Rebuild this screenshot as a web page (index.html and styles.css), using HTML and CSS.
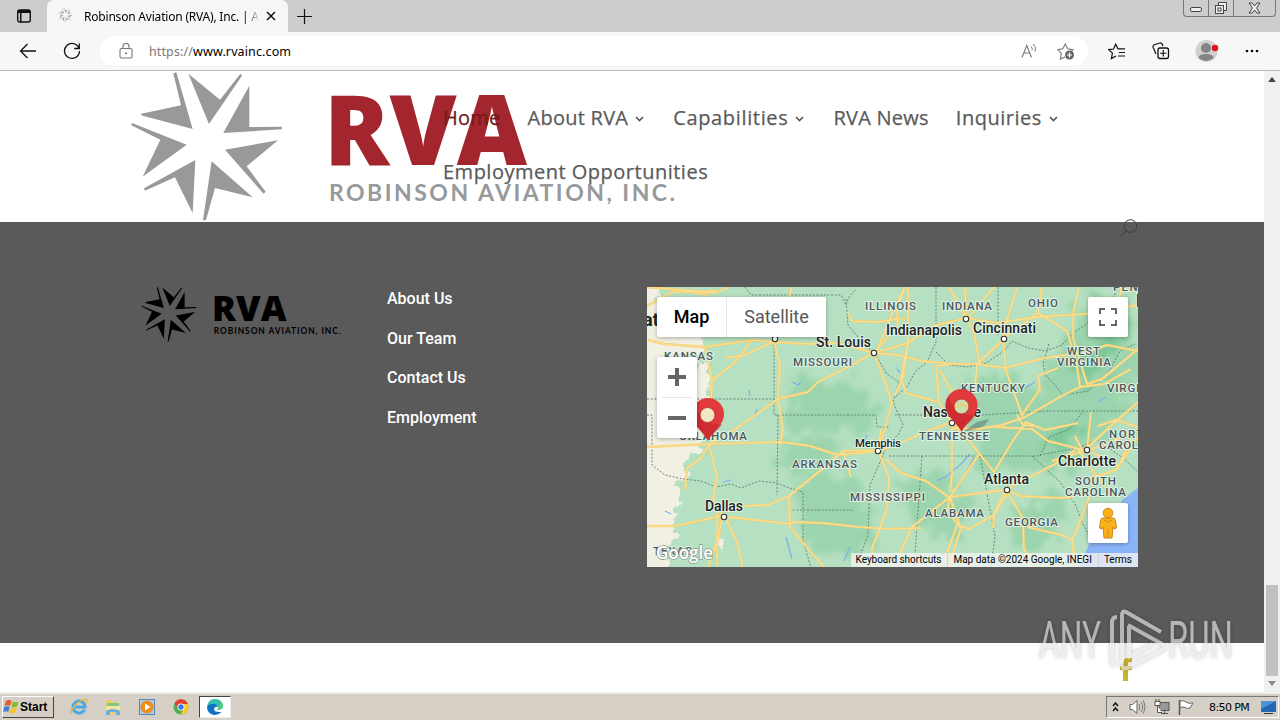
FILE: index.html
```html
<!DOCTYPE html>
<html lang="en">
<head>
  <meta charset="UTF-8">
  <meta name="viewport" content="width=device-width, initial-scale=1.0">
  <title>Robinson Aviation (RVA), Inc.</title>
  <link rel="stylesheet" href="styles.css">
</head>
<body>
  <svg class="defs" width="0" height="0">
    <symbol id="star" viewBox="33 12 454 450">
      <path d="M160 16l9-3 49 170-150-40q-8-3-4-6l119-25zM205 17l95 78 60-76q6-2 6 4l-99 145zM388 53v124l98-1v8l-176 11zM474 217l-94 78 57 76-6 6-116-132zM275 280l123 108-113-28-27 96-9 1zM226 276l-8 160-53-108-90 40-3-7zM200 230l-132 96 53-111-87-43 2-7z"/>
    </symbol>
    <symbol id="logo" viewBox="0 0 544 150">
      <use href="#star" width="151.3" height="150"/>
      <text class="logo-rva" x="193" y="92.5" textLength="203" lengthAdjust="spacingAndGlyphs">RVA</text>
      <text class="logo-sub" x="198" y="129" textLength="346">ROBINSON AVIATION, INC.</text>
    </symbol>
    <symbol id="pin" viewBox="0 0 34 44">
      <path d="M17 43C14 34 1 28 1 16a16 16 0 0 1 32 0c0 12-13 18-16 27z" fill="#e03a3c"/>
      <path d="M17 43C14 34 1 28 1 16a16 16 0 0 1 3-9c3 15 18 21 27 19-4 7-11 10-14 17z" fill="#c2232a" opacity=".6"/>
    </symbol>
  </svg>

  <div class="tabbar">
    <svg class="tab-menu" width="16" height="16" viewBox="0 0 16 16"><rect x="1.700" y="2" width="12.600" height="12" rx="2" fill="none" stroke="#111" stroke-width="1.400"/><path d="M2 2h12v3H5.500V14H4V5H2z" fill="#111"/></svg>
    <div class="tab">
      <svg class="favicon" width="16" height="16"><use href="#star" width="15" height="15"/></svg>
      <span class="tab-title">Robinson Aviation (RVA), Inc. | A</span>
      <svg width="10" height="10" viewBox="0 0 10 10"><path d="M1 1l8 8M9 1L1 9" stroke="#111" stroke-width="1.500"/></svg>
    </div>
    <svg class="new-tab" width="15" height="15" viewBox="0 0 15 15"><path d="M7.500 0v15M0 7.500h15" stroke="#111" stroke-width="1.200"/></svg>
    <div class="win-buttons">
      <span><svg width="14" height="14" viewBox="0 0 14 14"><rect x="1.500" y="6.500" width="11" height="4" rx="1.500" fill="#eee" stroke="#444"/></svg></span>
      <span><svg width="14" height="14" viewBox="0 0 14 14"><path d="M4.500 4V1.500h8v8H10" fill="#eee" stroke="#444"/><rect x="1.500" y="4.500" width="8" height="8" fill="#eee" stroke="#444"/><rect x="4" y="7" width="3" height="3" fill="none" stroke="#444"/></svg></span>
      <span class="win-close"><svg width="13" height="12" viewBox="0 0 13 12"><path d="M1 1h3l2.500 3L9 1h3L8.500 6l3.500 5H9L6.500 8 4 11H1l3.500-5z" fill="#eee" stroke="#444"/></svg></span>
    </div>
  </div>

  <div class="toolbar">
    <svg class="back" width="18" height="16" viewBox="0 0 18 16"><path d="M17 8H2M8.500 1L1.500 8l7 7" fill="none" stroke="#111" stroke-width="1.300"/></svg>
    <svg class="reload" width="18" height="18" viewBox="0 0 18 18"><path d="M16 6.200A7.500 7.500 0 1 0 16.500 9M16.300 1.500v5h-5" fill="none" stroke="#111" stroke-width="1.300"/></svg>
    <div class="address">
      <svg width="14" height="16" viewBox="0 0 14 16"><rect x="1" y="5.500" width="12" height="9.500" rx="1.500" fill="none" stroke="#777" stroke-width="1.100"/><path d="M4 5.500V3.500a3 3 0 0 1 6 0v2" fill="none" stroke="#777" stroke-width="1.100"/><circle cx="7" cy="10.200" r="1" fill="#777"/></svg>
      <span class="url"><i>https://</i>www.rvainc.com</span>
      <svg class="read" width="17" height="16" viewBox="0 0 17 16"><path d="M1 14.500L5.800 2.500l4.700 12M2.800 10h6" fill="none" stroke="#777" stroke-width="1.100"/><path d="M10 3.500q2 1.500 1 4M12 1q4 3 2 7.500" fill="none" stroke="#777"/></svg>
      <svg class="fav" width="18" height="17" viewBox="0 0 18 17"><path d="M8 14l-4.500 2 .8-5.500L.8 6.600l5-.8L8.300 1l2.300 4.800 5.400.8-2 2" fill="none" stroke="#777" stroke-width="1.100"/><circle cx="12.500" cy="12" r="4.500" fill="#666"/><path d="M12.500 9.500v5M10 12h5" stroke="#fff" stroke-width="1.200"/></svg>
    </div>
    <svg class="favorites" width="18" height="17" viewBox="0 0 18 17"><path d="M17 5.800h-7L7.700 1.200 5.500 6 .8 6.600l3.600 3.600-1 5.300L8 13M11 9.500h6M10 13h7" fill="none" stroke="#111" stroke-width="1.200"/></svg>
    <svg class="collections" width="18" height="18" viewBox="0 0 18 18"><path d="M4 12L1.200 5.500q-.7-2 1-2.800L8 1q2-.5 3 3" fill="none" stroke="#111" stroke-width="1.200"/><rect x="6" y="6" width="10.500" height="10.500" rx="2" fill="none" stroke="#111" stroke-width="1.300"/><path d="M11.250 8v6.500M8 11.250h6.500" stroke="#111" stroke-width="1.200"/></svg>
    <svg class="profile" width="24" height="24" viewBox="0 0 24 24"><circle cx="11.500" cy="12" r="11" fill="#d2d0ce"/><circle cx="11" cy="9" r="5" fill="#858585"/><path d="M3.500 19q0-4 7.500-4t7.500 4q-7.500 6-15 0z" fill="#858585"/><circle cx="20" cy="9" r="3.200" fill="#e1101f"/></svg>
    <svg class="more" width="14" height="4" viewBox="0 0 14 4"><circle cx="2" cy="2" r="1.300"/><circle cx="7" cy="2" r="1.300"/><circle cx="12" cy="2" r="1.300"/></svg>
  </div>

  <div class="viewport">
    <main class="page">
      <header class="site-header">
        <svg class="logo" width="544" height="150"><use href="#logo"/></svg>
        <nav class="menu">
          <a class="active">Home</a>
          <a class="about">About RVA <svg width="9" height="6" viewBox="0 0 9 6"><path d="M1 1l3.500 3.500L8 1"/></svg></a>
          <a class="capabilities">Capabilities <svg width="9" height="6" viewBox="0 0 9 6"><path d="M1 1l3.500 3.500L8 1"/></svg></a>
          <a class="news">RVA News</a>
          <a>Inquiries <svg width="9" height="6" viewBox="0 0 9 6"><path d="M1 1l3.500 3.500L8 1"/></svg></a>
          <a>Employment Opportunities</a>
        </nav>
        <svg class="search" width="18" height="18" viewBox="0 0 18 18"><circle cx="10.500" cy="7" r="6.300"/><path d="M6 11.500L1 17"/></svg>
      </header>

      <footer class="site-footer">
        <svg class="footer-logo" width="200" height="55"><use href="#logo"/></svg>
        <ul class="footer-links">
          <li>About Us</li>
          <li>Our Team</li>
          <li>Contact Us</li>
          <li>Employment</li>
        </ul>
        <div class="map">
          <svg width="491" height="280" viewBox="0 0 491 280">
            <defs>
              <filter id="rough" x="-10%" y="-10%" width="120%" height="120%">
                <feTurbulence type="fractalNoise" baseFrequency=".06" numOctaves="3" seed="4"/>
                <feDisplacementMap in="SourceGraphic" scale="50" xChannelSelector="R" yChannelSelector="G"/>
                <feGaussianBlur stdDeviation="2.500"/>
              </filter>
              <filter id="edge">
                <feTurbulence type="fractalNoise" baseFrequency=".12" numOctaves="2" seed="7"/>
                <feDisplacementMap in="SourceGraphic" scale="14" xChannelSelector="R" yChannelSelector="G"/>
              </filter>
            </defs>
            <rect width="491" height="280" fill="#b5e0c1"/>
            <!-- forest and hills -->
            <g fill="#91d0a6" filter="url(#rough)" opacity=".7">
              <path d="M150 90l30 10 30-5 25 25-20 30-35-10-40 10zM135 165l40-22 25 15-15 20-45 8zM145 190l60-10 20 60-10 35-50-10zM310 95l50-10 30 20 25-50 30-45 40 10 6 90-60 50-50 20-50 10zM330 160l110-35 30 20-60 40-60-5zM250 195l40-10 40 30-20 40-50-20zM365 220l60-10-20 50-40 5z"/>
            </g>
            <g fill="#66bf89" filter="url(#rough)" opacity=".55">
              <path d="M425 80l20-25 15-25 22 10-25 40-25 20zM380 162l35-20 25-3-20 22z"/>
            </g>
            <!-- plains -->
            <g fill="#f2efe3" filter="url(#edge)">
              <path d="M-9-9h26l-8 27 14 16 30 6 3 24-13 10 14 13 8 37-10 20-2 20-18 12 6 14-13 8 7 16-9 15 6 22-12 8 2 31H-9z"/>
              <path d="M49 70l12 10 2 22-6-3zM70 250l8 4-6 14zM25 225l7 2-5 7z"/>
            </g>
            <path d="M491 201l-15 11-12 20-17 14-15 34h59z" fill="#8ab4f8"/>
            <g class="water">
              <path d="M102 103l1 6M145 95l6 3 3-3M76 195l8-2M110 122l-3 8M139 250l6 22M290 194l10-5 15-13 8-9M318 188l9-18M376 142l12-4M220 148l-5 13M203 260l-6 14M250 82l5 6M388 95l-10 6M451 115l8-5M18 224l6 3"/>
            </g>
            <g class="border">
              <path d="M98 0l6 8h90l5 10 3-8 7-8M199 12l2 26 15 18 12 11 12 20 12 8-6 20 10 23-5 10-10 8-7 17-11 25-2 50-12 32-4 18"/>
              <path d="M127 50v62M0 112h127v16h102l1 12h13M131 128l-1 80M0 128h5v50l13 10 18 4 18 2 15 6 15-3 10 4 18-7 18 2 12 5 14 4v48l11 39M142 223h65"/>
              <path d="M289 0v55l-9 20-12 10-8 15-12 10M289 65l13 13 19 2 18-4 18-12 8-10 16 7 18 3 16-6 11-12 12-8 16-14 13-15 6-14M351 0v48M402 57l-6 20 3 12 10 10 7 9 25-4 20-18 12-22 15-7M248 128h87l65-4h91M242 169h151l9-19 21-8 13-18M275 169l-8 111M333 169l15 80-4 31M385 169l28 26 15 22 9 22 5 10M393 168l38-7 19-8 26 18 15 14"/>
            </g>
            <g class="road road-edge">
              <path id="roads" d="M1 53l17 4 40 3 47-7 22 2 34 2 30-1 36 10M58 60l7 33-2 60M105 53L88 75 66 93M127 55l6 23-2 33 5 32-3 15M78 71l20-3 28-13M227 66l-24 13-32 16-10 10-30 7-41 29-27 16M227 66l11 29 7 20-7 26-7 23M231 61l15-36 12-25M258 0l-8 22 1 15M201 26l4 8 26 1 27-4M251 38l-24 28M0 19l25-14 48-1 9-4M145 0l-3 11M0 160l20-1 42-2 73-2 28 4 28 9 40-4M62 157l8 33-4 22 9 15M63 157l-10 15-13 9-2 22M38 4l22 4M0 239h28l28-6 17-4 70 8 4-2 28 1 37 4 30 2 33-1M142 209l-21 9-48 2M142 209l32-26 22-19 35-1M142 209l1 31 24 29 10 11M75 229l-3 20-11 31M78 229l12 26 6 25M70 220v59M196 164l8 26M227 66l34-10 25-17 33-8M319 31l30 5 42-6 47-3 53-9M319 31l8 15 6 31-25 0-34-3-23-6-24-2M319 31l-1-31M319 31L302 0M321 31l26-31M261 0v55l-7 35 5 16 35 10M248 108l8-18 5-35M330 77l-26 0-15 2 3 36 12 20M330 77l28-26M330 77l28 4-2-35 14-46M358 81l17 47 18-26-2-13 20-8M357 51l34-25 4-26M391 26l29 18 9 30 4 26-20 10-35 20-23 8-24 4-26-1M358 81l40-10 35-5M370 128l6 10 11 1M305 135l-22 8-42 18-10 3M305 135l0-30-12-22M305 135l0 53-2 17M305 135l23-33 2-25M305 135l18 20 24 30 18-30 14-20M232 165l10 26-2 30-5 15-10 25v19M239 172l15 14 25 8 24 17M231 163l3-21M303 210l-38 30-17 38M303 210l55-7M303 210l10 29 9 3 25-14 15-25M303 210l29-43M303 210l-3 14 14 17-6 19-6 20M310 238l-15 42M359 203l-12 24-1 14M359 203l17 28 1 31 10 18M361 203l12 6 40 2 13-1M360 202l48-25 20-14M347 140l38 2 16 12 39 10 51-20M379 135l19 8 33-7M435 163l-7-14M440 163l4-38M440 163l-35 11M431 162l16 24 12 14M441 160l25-23 25-22M444 165l28 14 12-29 7-8M446 200l-12 32-9 21-10-5-35-8M425 253l4 27M447 190l22-7 22-33M433 100l24-3 27-15M432 68l28-10 31 6M426 26v25l14 46 15-5 36-30M426 26l6-26M475 0l-5 19M451 139l18-6 22 7M0 0l70 6"/>
            </g>
            <use href="#roads" class="road road-fill"/>
            <g class="dot">
              <circle cx="128" cy="52" r="2.700"/><circle cx="227" cy="66" r="2.700"/><circle cx="319" cy="32" r="2.700"/><circle cx="357" cy="52" r="2.700"/><circle cx="305" cy="136" r="2.700"/><circle cx="231" cy="164" r="2.700"/><circle cx="440" cy="163" r="2.700"/><circle cx="360" cy="203" r="2.700"/><circle cx="77" cy="230" r="2.700"/>
            </g>
            <g class="state">
              <text x="17" y="73" textLength="49">KANSAS</text>
              <text x="218" y="23" textLength="51">ILLINOIS</text>
              <text x="295" y="23" textLength="50">INDIANA</text>
              <text x="381" y="20" textLength="30">OHIO</text>
              <text x="466" y="4" textLength="34">PENN</text>
              <text x="146" y="79" textLength="59">MISSOURI</text>
              <text x="420" y="68" textLength="33">WEST</text>
              <text x="410" y="79" textLength="54">VIRGINIA</text>
              <text x="314" y="105" textLength="64">KENTUCKY</text>
              <text x="460" y="105" textLength="54">VIRGINIA</text>
              <text x="32" y="153" textLength="68">OKLAHOMA</text>
              <text x="272" y="153" textLength="70">TENNESSEE</text>
              <text x="462" y="151" textLength="44">NORTH</text>
              <text x="452" y="162" textLength="60">CAROLINA</text>
              <text x="145" y="181" textLength="65">ARKANSAS</text>
              <text x="428" y="198" textLength="41">SOUTH</text>
              <text x="418" y="209" textLength="61">CAROLINA</text>
              <text x="203" y="214" textLength="75">MISSISSIPPI</text>
              <text x="278" y="230" textLength="59">ALABAMA</text>
              <text x="358" y="239" textLength="53">GEORGIA</text>
              <text x="6" y="268" textLength="39">TEXAS</text>
            </g>
            <g class="city">
              <text x="169" y="60" textLength="55">St. Louis</text>
              <text x="239" y="48" textLength="76">Indianapolis</text>
              <text x="326" y="46" textLength="63">Cincinnati</text>
              <text x="276" y="130" textLength="58">Nashville</text>
              <text class="small" x="208" y="160" textLength="46">Memphis</text>
              <text x="411" y="179" textLength="58">Charlotte</text>
              <text x="337" y="197" textLength="45">Atlanta</text>
              <text x="58" y="224" textLength="38">Dallas</text>
              <text class="big" x="-4" y="39">at</text>
              <text class="big" x="489" y="20">P</text>
            </g>
            <path d="M317 144l13-9 12-3-5 7-15 5z" fill="#345" opacity=".35"/>
            <use href="#pin" x="44" y="111" width="34" height="44"/>
            <use href="#pin" x="297" y="102" width="35" height="44"/>
            <circle cx="60.500" cy="128" r="7.500" fill="#f3e6c6" stroke="#c23a33"/>
            <g class="ring">
              <circle cx="314.500" cy="119.500" r="7.500" fill="#c9dfae" stroke="#c23a33"/>
              <path d="M309 121q4-7 11-1" fill="none" stroke="#f0cf73" stroke-width="2"/>
            </g>
            <text class="google" x="9" y="272" textLength="57" lengthAdjust="spacingAndGlyphs">Google</text>
          </svg>
          <div class="map-type"><span class="on">Map</span><span>Satellite</span></div>
          <div class="map-zoom">
            <svg width="18" height="18" viewBox="0 0 18 18"><path d="M9 0v18M0 9h18"/></svg>
            <hr>
            <svg width="18" height="18" viewBox="0 0 18 18"><path d="M0 9h18"/></svg>
          </div>
          <div class="map-button full"><svg width="18" height="18" viewBox="0 0 18 18"><path d="M1 6V1h5M12 1h5v5M17 12v5h-5M6 17H1v-5" fill="none" stroke="#666" stroke-width="2"/></svg></div>
          <div class="map-button pegman"><svg width="20" height="32" viewBox="0 0 20 32"><path d="M5 11h10q2 0 2.500 3l1 7-2.500 1-1-2-1 11H6L5 20l-1 2-2.500-1 1-7Q3 11 5 11z" fill="#fbb11c" stroke="#c88512"/><path d="M10 22v8M6 13l4 2 4-2" fill="none" stroke="#d38b0c"/><circle cx="10" cy="6" r="4.800" fill="#fbb11c" stroke="#c88512"/></svg></div>
          <div class="map-terms"><span class="keys">Keyboard shortcuts</span><span>Map data ©2024 Google, INEGI</span><span>Terms</span></div>
        </div>
      </footer>
      <div class="bottom-bar">
        <svg width="12" height="23" viewBox="0 0 12 23"><path d="M3 23V12H0V8h3V5q0-5 5-5h4v4H9.500Q8 4 8 5.500V8h4l-.500 4H8v11z" fill="#c9b52c"/></svg>
      </div>
    </main>
    <div class="scrollbar">
      <svg width="8" height="5" viewBox="0 0 8 5"><path d="M0 5l4-5 4 5z" fill="#444"/></svg>
      <div class="thumb"></div>
      <svg width="8" height="5" viewBox="0 0 8 5"><path d="M0 0l4 5 4-5z" fill="#888"/></svg>
    </div>
  </div>

  <div class="taskbar">
    <div class="start">
      <svg width="17" height="16" viewBox="0 0 17 16"><path d="M3 2q3-2 5.500 0L7 7Q4.500 5.500 1.500 7z" fill="#e8592b"/><path d="M9.500 2.500q3 1.500 6 0L14 7.500q-3 1.500-5.500 0z" fill="#86b93c"/><path d="M1.200 8q3-1.500 5.500 0l-1.500 5Q3 11.500 0 13z" fill="#3b82d0"/><path d="M8 8.500q3 1.500 6 0l-1.500 5q-3 1.500-6 0z" fill="#f5c12c"/></svg>
      Start
    </div>
    <div class="task"><svg width="18" height="18" viewBox="0 0 18 18"><path d="M14.500 11.500A6 6 0 1 1 15 9H4" fill="none" stroke="#49a9e0" stroke-width="3"/><path d="M1.500 16C-1 12 11 0 16 1.500q2 1-.5 4" fill="none" stroke="#e8b83a" stroke-width="1.400"/></svg></div>
    <div class="task"><svg width="18" height="18" viewBox="0 0 18 18"><path d="M2 2h5l1 2h7v12H2z" fill="#eccf6a"/><path d="M3 5h12v4H3z" fill="#84c784"/><path d="M2 8h14v4H2z" fill="#f5e6a5"/><path d="M2 17v-4q7-4 14 0v4h-4v-3H6v3z" fill="#69afe0"/></svg></div>
    <div class="task"><svg width="18" height="18" viewBox="0 0 18 18"><rect x="1.500" y="1.500" width="15" height="15" fill="#a9cce8" stroke="#5688b3"/><circle cx="9" cy="9" r="6.500" fill="#f28a1d"/><path d="M7 5.500v7L12.500 9z" fill="#fff"/></svg></div>
    <div class="task"><svg width="18" height="18" viewBox="0 0 18 18"><circle cx="9" cy="9" r="7.500" fill="#4caf50"/><path d="M2.500 5.200A7.500 7.500 0 0 1 16 6H9L6 11z" fill="#e5412f"/><path d="M16 6a7.500 7.500 0 0 1-7.500 10.500L12 10 9 6z" fill="#f9c926"/><circle cx="9" cy="9" r="3.600" fill="#fff"/><circle cx="9" cy="9" r="2.700" fill="#3b78e7"/></svg></div>
    <div class="task current"><svg width="18" height="18" viewBox="0 0 18 18"><path d="M1 9Q3 4 8.500 5q4.500 1 3.500 4-3-1-4 1.500-.5 4 7.500 3.500Q12 17.500 8 17 1 15.500 1 9z" fill="#1270c4"/><path d="M1 8Q3 0 10 1q7 1 7 7.500-1 4-6 3 2-2-.5-4.500Q7 4 1 8z" fill="#35bfb0"/><path d="M10 1q7 1 7 7.500-1 4-6 3 2-1 .5-4 4-1 2-4.500z" fill="#5ccf74" opacity=".7"/></svg></div>
    <div class="tray">
      <svg width="7" height="10" viewBox="0 0 7 10"><path d="M1 4l2.500-3L6 4M1 9l2.500-3L6 9" fill="none" stroke="#111" stroke-width="1.500"/></svg>
      <svg class="sound" width="17" height="16" viewBox="0 0 17 16"><path d="M1 5.500h2.500L8 1.500v13l-4.500-4H1z" fill="#fff" stroke="#666"/><path d="M10 5q2 3 0 6M12 3q3.500 5 0 10M14 1.500q4 6.500 0 13" fill="none" stroke="#777"/></svg>
      <svg class="net" width="16" height="16" viewBox="0 0 16 16"><rect x="5" y="3.500" width="10" height="8" fill="#999" stroke="#555"/><path d="M7 14.500h7M10.500 12v2" stroke="#555"/><path d="M1 2.500h5v4H1zM2 0v2M5 0v2M3.500 7v6.500H8" fill="#fff" stroke="#555"/></svg>
      <svg class="flag" width="16" height="16" viewBox="0 0 16 16"><path d="M1.500 1v15" stroke="#555" stroke-width="1.500"/><path d="M2 2q4-1 6 1t7 1l-3 5q-3 1-5-.5T2 9z" fill="#fff" stroke="#666"/></svg>
      <span class="clock">8:50 PM</span>
      <svg class="desktop" width="16" height="13" viewBox="0 0 16 13"><path d="M0 0h15v11H0z" fill="#2467b5"/><path d="M0 0h15L0 8z" fill="#4b93da"/><path d="M3 12.500h9" stroke="#333"/></svg>
    </div>
  </div>

  <svg class="watermark" width="200" height="70" viewBox="0 0 200 70">
    <g class="mark">
      <text x="3" y="54" textLength="62" lengthAdjust="spacingAndGlyphs">ANY</text>
      <text x="132" y="54" textLength="65" lengthAdjust="spacingAndGlyphs">RUN</text>
      <path d="M81 13q-5 0-5 6v38q0 5 4 2M86 60V11q0-5 4-3l35 20M92 21l34 19q5 3 0 6L91 64q-4 2-5-3M93 22v31l24-13"/>
    </g>
  </svg>
</body>
</html>
```
FILE: styles.css
```css
* {
  box-sizing: border-box;
}
body {
  margin: 0;
  width: 1280px;
  height: 720px;
  overflow: hidden;
  display: flex;
  flex-direction: column;
  font-family: "Open Sans", sans-serif;
  background: #fff;
}
svg {
  display: block;
  flex-shrink: 0;
}
.defs {
  position: absolute;
}

/* browser chrome */
.tabbar {
  height: 32px;
  background: #cdcdcd;
  display: flex;
  align-items: center;
}
.tab-menu {
  margin: 0 15px 0 16px;
}
.tab {
  width: 241px;
  height: 32px;
  background: #f7f7f7;
  border-radius: 7px 7px 0 0;
  display: flex;
  align-items: center;
  padding-left: 11px;
}
.favicon {
  fill: #aaa;
  margin-right: 10px;
}
.tab-title {
  width: 174px;
  margin-right: 8px;
  font: 12px "Noto Sans", sans-serif;
  letter-spacing: -0.2px;
  white-space: nowrap;
  overflow: hidden;
  color: transparent;
  background: linear-gradient(90deg, #000 92%, #ccc);
  background-clip: text;
}
.new-tab {
  margin-left: 9px;
}
.win-buttons {
  align-self: flex-start;
  display: flex;
  height: 17px;
  margin: 0 4px 0 auto;
  border: 1px solid #777;
  border-top: 0;
  border-radius: 0 0 4px 4px;
}
.win-buttons span {
  width: 25px;
  display: flex;
  align-items: center;
  justify-content: center;
  border-right: 1px solid #777;
}
.win-buttons .win-close {
  width: 41px;
  border: 0;
}
.toolbar {
  height: 39px;
  background: #f7f7f7;
  border-bottom: 1px solid #bbb;
  display: flex;
  align-items: center;
}
.back {
  margin: 0 26px 0 19px;
}
.address {
  width: 988px;
  height: 30px;
  margin-left: 19px;
  border-radius: 15px;
  background: #fff;
  display: flex;
  align-items: center;
  padding-left: 19px;
}
.url {
  margin-left: 16px;
  font: 12.5px "Noto Sans", sans-serif;
  letter-spacing: 0.12px;
  color: #000;
}
.url i {
  font-style: normal;
  color: #777;
}
.read {
  margin-left: auto;
}
.fav {
  margin: 0 13px 0 19px;
}
.favorites {
  margin-left: 20px;
}
.collections {
  margin-left: 26px;
}
.profile {
  margin-left: 25px;
}
.more {
  margin-left: 26px;
}

/* page */
.viewport {
  height: 621px;
  display: flex;
}
.page {
  width: 1264px;
}
.site-header {
  height: 151px;
  padding: 1px 0 0 131px;
  display: grid;
  grid-template-columns: 312px 700px;
  position: relative;
}
.logo, .menu {
  grid-row: 1;
}
.logo {
  grid-column: 1;
  fill: #97999b;
  --rva: #a3262e;
}
.logo-rva {
  font: 800 98px "Open Sans", sans-serif;
  fill: var(--rva);
}
.logo-sub {
  font: 700 23px Lato, sans-serif;
}
.menu {
  grid-column: 2;
  display: flex;
  flex-wrap: wrap;
  align-content: flex-start;
  column-gap: 27px;
  padding-top: 19px;
  font-size: 20px;
  line-height: 54px;
  letter-spacing: 0.5px;
  color: #5a5a5a;
  -webkit-text-stroke: 0.25px;
  z-index: 1;
}
.menu a {
  display: flex;
  align-items: center;
}
.menu .active {
  color: #73191a;
  letter-spacing: 0.25px;
}
.menu .about, .menu .news {
  letter-spacing: 0.25px;
}
.menu .capabilities {
  letter-spacing: 0.65px;
}
.menu svg {
  margin: 2px 2px 0 7px;
  fill: none;
  stroke: #555;
  stroke-width: 1.6;
}
.search {
  position: absolute;
  left: 1120px;
  top: 148px;
  fill: none;
  stroke: #3b3b3b;
}
.site-footer {
  height: 421px;
  background: #5a5a5a;
  padding: 65px 0 0 141px;
  display: flex;
}
.footer-logo {
  fill: #000;
  --rva: #000;
}
.footer-links {
  list-style: none;
  margin: -8px 0 0 46px;
  padding: 0;
  width: 260px;
  font: 500 16px/39.6px Roboto, sans-serif;
  color: #fff;
}
.bottom-bar {
  height: 49px;
  padding: 15px 0 0 1120px;
}

/* map */
.map {
  position: relative;
  width: 491px;
  height: 280px;
  overflow: hidden;
  font-family: Roboto, sans-serif;
}
.road {
  fill: none;
  stroke-linejoin: round;
}
.road-edge {
  stroke: #f3cf75;
  stroke-width: 2.4;
}
.road-fill {
  stroke: #fde293;
  stroke-width: 1.1;
}
.border {
  fill: none;
  stroke: #5f7d70;
  stroke-width: 0.9;
  stroke-dasharray: 2 1.6;
}
.water {
  fill: none;
  stroke: #7fadf0;
  stroke-width: 1.2;
}
.dot {
  fill: #fff;
  stroke: #333;
  stroke-width: 1.1;
}
.state, .city {
  paint-order: stroke;
  stroke: #e2f3e4;
  stroke-width: 2px;
  stroke-linejoin: round;
}
.state {
  font-size: 11.5px;
  font-weight: 500;
  fill: #4a5860;
}
.city {
  font-size: 14px;
  font-weight: 500;
  fill: #202124;
}
.city .small {
  font-size: 11.5px;
}
.city .big {
  font-size: 18px;
  font-weight: 700;
}
.google {
  font: 600 18px "Open Sans", sans-serif;
  fill: #fff;
  stroke: #8b9b8d;
  stroke-width: 1.5px;
  paint-order: stroke;
}
.map-type, .map-zoom, .map-button, .map-terms {
  position: absolute;
  background: #fff;
}
.map-type, .map-zoom, .map-button {
  border-radius: 2px;
  box-shadow: 0 1px 4px rgba(0,0,0,0.3);
}
.map-type {
  left: 10px;
  top: 10px;
  height: 40px;
  display: flex;
  align-items: center;
  font-size: 18px;
  line-height: 40px;
  color: #565656;
}
.map-type span {
  width: 99px;
  text-align: center;
}
.map-type .on {
  width: 70px;
  font-weight: 500;
  color: #000;
  border-right: 1px solid #e8e8e8;
}
.map-zoom {
  left: 10px;
  top: 70px;
  width: 40px;
  height: 81px;
  padding: 11px 5px;
  display: flex;
  flex-direction: column;
  align-items: center;
  justify-content: space-between;
}
.map-zoom hr {
  width: 30px;
  margin: 0;
  border: 0;
  border-top: 1px solid #e6e6e6;
}
.map-zoom path {
  stroke: #666;
  stroke-width: 4;
}
.map-button {
  width: 40px;
  height: 40px;
  right: 10px;
  display: flex;
  align-items: center;
  justify-content: center;
}
.full {
  top: 10px;
}
.pegman {
  top: 216px;
}
.map-terms {
  right: 0;
  bottom: 0;
  height: 14px;
  display: flex;
  background: rgba(245,245,245,0.75);
  font-size: 10px;
  line-height: 14px;
  color: #000;
  white-space: nowrap;
}
.map-terms span {
  padding: 0 6px 0 5px;
}
.map-terms .keys {
  letter-spacing: -0.05px;
}
.map-terms span + span {
  border-left: 1px solid #ccd4d0;
}

/* scrollbar */
.scrollbar {
  width: 16px;
  background: #f1f1f1;
  display: flex;
  flex-direction: column;
  align-items: center;
  padding: 6px 0;
}
.thumb {
  width: 12px;
  height: 91px;
  margin: auto 0 5px;
  background: #c1c1c1;
}

/* taskbar */
.taskbar {
  height: 28px;
  background: #d5cfc6;
  border-top: 2px solid #eee;
  display: flex;
  align-items: center;
  padding-left: 2px;
}
.start {
  width: 52px;
  height: 22px;
  margin-right: 9px;
  display: flex;
  align-items: center;
  border: 1px solid;
  border-color: #fff #444 #444 #fff;
  font: bold 12px "Liberation Sans", sans-serif;
}
.task {
  width: 32px;
  height: 22px;
  margin-right: 2px;
  display: flex;
  align-items: center;
  justify-content: center;
}
.current {
  background: #fff;
  border: 1px solid;
  border-color: #444 #eee #eee #444;
}
.tray {
  width: 173px;
  height: 22px;
  margin: 0 1px 0 auto;
  border: 1px solid;
  border-color: #777 #fff #fff #777;
  display: flex;
  align-items: center;
  padding-left: 5px;
}
.sound {
  margin-left: 10px;
}
.net, .flag {
  margin-left: 8px;
}
.clock {
  margin-left: 15px;
  font: 11px "DejaVu Sans", sans-serif;
  letter-spacing: -0.6px;
  white-space: nowrap;
}
.desktop {
  margin-left: auto;
  margin-right: 1px;
}

.watermark {
  position: absolute;
  left: 1036px;
  top: 604px;
}
.mark {
  opacity: 0.65;
  filter: drop-shadow(0 0 2px rgba(0,0,0,0.35));
}
.mark text {
  font: 400 52px Roboto, sans-serif;
  fill: #e6e6e6;
}
.mark path {
  fill: none;
  stroke: #e6e6e6;
  stroke-width: 4;
  stroke-linejoin: round;
}
```
